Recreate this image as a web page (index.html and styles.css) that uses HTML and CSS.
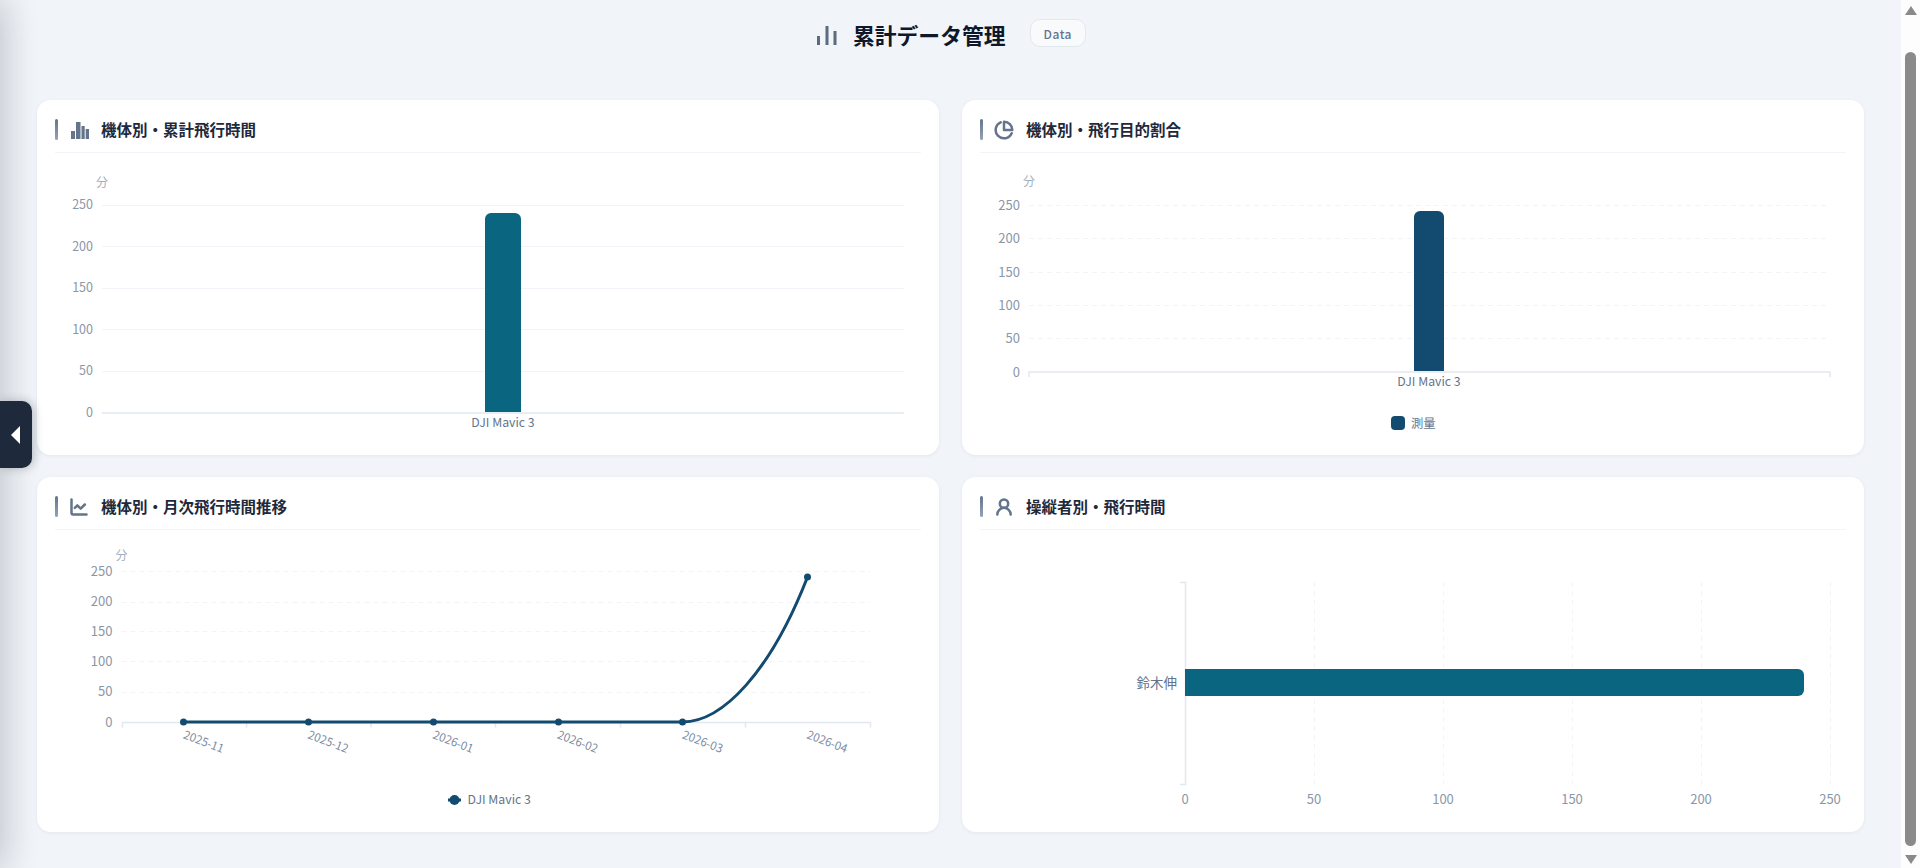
FILE: index.html
```html
<!DOCTYPE html>
<html lang="ja">
  <head>
    <meta charset="UTF-8" />
    <meta name="viewport" content="width=device-width, initial-scale=1.0" />
    <title>累計データ管理</title>
    <link rel="stylesheet" href="styles.css">
  </head>
  <body>
    <div class="sidebarEdge"></div>
    <button class="sidebarToggle"><span class="toggleArrow"></span></button>

    <main class="page">
      <header class="pageHeader">
        <svg class="pageIcon" viewBox="0 0 24 24">
          <path d="M3.5 13v9M12 3v19M20 8v14" />
        </svg>
        <h1>累計データ管理</h1>
        <span class="badge">Data</span>
      </header>

      <section class="cardGrid">
        <!-- 機体別 累計 -->
        <article class="card">
          <div class="cardHeader">
            <svg class="cardIcon filled" viewBox="-2 -1 20 20">
              <path d="M0 10h4v8H0zM5 1h4.500v17H5zM10.500 5h3.200v13h-3.200zM14.700 8H18v10h-3.300z" />
            </svg>
            <h2>機体別・累計飛行時間</h2>
          </div>
          <svg class="chart" viewBox="55 153 866 283">
            <text class="unit" x="102" y="187" text-anchor="middle">分</text>
            <g class="gridLine">
              <path d="M102 205.500H904M102 246.500H904M102 288.500H904M102 329.500H904M102 371.500H904" />
            </g>
            <path class="axisLine" d="M102 413H904" />
            <g class="tick small" text-anchor="end">
              <text x="93" y="209">250</text>
              <text x="93" y="251">200</text>
              <text x="93" y="292">150</text>
              <text x="93" y="334">100</text>
              <text x="93" y="375">50</text>
              <text x="93" y="417">0</text>
            </g>
            <path class="teal" d="M485 412V219a6 6 0 0 1 6-6h24a6 6 0 0 1 6 6V412z" />
            <text class="catLabel" x="503" y="427" text-anchor="middle">DJI Mavic 3</text>
          </svg>
        </article>

        <!-- 飛行目的 -->
        <article class="card">
          <div class="cardHeader">
            <svg class="cardIcon" viewBox="0 0 24 24">
              <path d="M21.210 15.890A10 10 0 1 1 8 2.830" />
              <path d="M22 12A10 10 0 0 0 12 2v10z" />
            </svg>
            <h2>機体別・飛行目的割合</h2>
          </div>
          <svg class="chart" viewBox="980 153 866 283">
            <text class="unit" x="1029" y="186" text-anchor="middle">分</text>
            <g class="gridLine dashed">
              <path d="M1029 205.500H1830M1029 238.500H1830M1029 272.500H1830M1029 305.500H1830M1029 338.500H1830" />
            </g>
            <path class="axisLine" d="M1029 377V372H1830V377" />
            <g class="tick" text-anchor="end">
              <text x="1020" y="210">250</text>
              <text x="1020" y="243">200</text>
              <text x="1020" y="277">150</text>
              <text x="1020" y="310">100</text>
              <text x="1020" y="343">50</text>
              <text x="1020" y="377">0</text>
            </g>
            <path class="navy" d="M1414 371V217a6 6 0 0 1 6-6h18a6 6 0 0 1 6 6V371z" />
            <text class="catLabel" x="1429" y="386" text-anchor="middle">DJI Mavic 3</text>
            <rect class="navy" x="1391" y="416" width="14" height="14" rx="4" />
            <text class="legendLabel" x="1411" y="428">測量</text>
          </svg>
        </article>

        <!-- 月次推移 -->
        <article class="card">
          <div class="cardHeader">
            <svg class="cardIcon" viewBox="0 0 24 24">
              <path d="M3 3v16a2 2 0 0 0 2 2h16" />
              <path d="M19 9l-5 5-4-4-3 3" />
            </svg>
            <h2>機体別・月次飛行時間推移</h2>
          </div>
          <svg class="chart" viewBox="54.500 530 866 283">
            <text class="unit" x="121" y="560" text-anchor="middle">分</text>
            <g class="gridLine dashed">
              <path d="M121 571.500H870M121 602.500H870M121 631.500H870M121 661.500H870M121 692.500H870" />
            </g>
            <path class="axisLine" d="M122 722.500H870M122 722.500v5M246 722.500v5M370.500 722.500v5M495 722.500v5M620 722.500v5M745 722.500v5M870 722.500v5" />
            <g class="tick" text-anchor="end">
              <text x="112" y="576">250</text>
              <text x="112" y="606">200</text>
              <text x="112" y="636">150</text>
              <text x="112" y="666">100</text>
              <text x="112" y="696">50</text>
              <text x="112" y="727">0</text>
            </g>
            <g class="dateLabel">
              <text transform="translate(182 738) rotate(21)">2025-11</text>
              <text transform="translate(306.500 738) rotate(21)">2025-12</text>
              <text transform="translate(431.500 738) rotate(21)">2026-01</text>
              <text transform="translate(556 738) rotate(21)">2026-02</text>
              <text transform="translate(681 738) rotate(21)">2026-03</text>
              <text transform="translate(805.500 738) rotate(21)">2026-04</text>
            </g>
            <path class="trendLine" d="M183 722H682C722 722 770 672 807 577" />
            <g class="navy">
              <circle cx="183" cy="722" r="3.500" />
              <circle cx="308" cy="722" r="3.500" />
              <circle cx="433" cy="722" r="3.500" />
              <circle cx="558" cy="722" r="3.500" />
              <circle cx="682" cy="722" r="3.500" />
              <circle cx="807" cy="577" r="3.500" />
              <circle cx="454" cy="800" r="5" />
            </g>
            <path class="legendStroke" d="M447.500 800H460.500" />
            <text class="legendLabel" x="467" y="804">DJI Mavic 3</text>
          </svg>
        </article>

        <!-- 操縦者別 -->
        <article class="card">
          <div class="cardHeader">
            <svg class="cardIcon" viewBox="0 0 24 24">
              <circle cx="12" cy="8" r="5" />
              <path d="M20 21a8 8 0 0 0-16 0" />
            </svg>
            <h2>操縦者別・飛行時間</h2>
          </div>
          <svg class="chart" viewBox="980 530 866 283">
            <g class="gridLine dashed">
              <path d="M1314.500 582V784M1443.500 582V784M1572.500 582V784M1701.500 582V784M1830.500 582V784" />
            </g>
            <path class="axisLine" d="M1180 582.500H1185.500V784.500H1180" />
            <path class="teal" d="M1185 669H1798a6 6 0 0 1 6 6V690a6 6 0 0 1-6 6H1185z" />
            <text class="catLabel large" x="1177" y="688" text-anchor="end">鈴木伸</text>
            <g class="tick" text-anchor="middle">
              <text x="1185" y="804">0</text>
              <text x="1314" y="804">50</text>
              <text x="1443" y="804">100</text>
              <text x="1572" y="804">150</text>
              <text x="1701" y="804">200</text>
              <text x="1830" y="804">250</text>
            </g>
          </svg>
        </article>
      </section>
    </main>

    <div class="scrollStrip">
      <span class="scrollUp"></span>
      <div class="scrollTrack"><span class="scrollThumb"></span></div>
      <span class="scrollDown"></span>
    </div>
  </body>
</html>
```

FILE: styles.css
```css
* {
  margin: 0;
  padding: 0;
  box-sizing: border-box;
}

html, body {
  height: 100%;
  overflow: hidden;
}

body {
  display: flex;
  background-color: #f1f5f9;
  font-family: "Noto Sans CJK JP", "Noto Sans", sans-serif;
}

.page {
  flex: 1;
  min-width: 0;
  padding: 0 37px;
}

.pageHeader {
  height: 100px;
  padding-top: 19px;
  display: flex;
  justify-content: center;
  align-items: flex-start;
}

.pageIcon {
  width: 24px;
  height: 24px;
  margin: 4px 14px 0 0;
  fill: none;
  stroke: #5b6b80;
  stroke-width: 3;
}

.pageHeader h1 {
  font-size: 21.800px;
  line-height: 32px;
  font-weight: 700;
  color: #0f172a;
}

.badge {
  height: 28px;
  margin-left: 24px;
  padding: 0 13px;
  display: flex;
  align-items: center;
  font-size: 12px;
  font-weight: 500;
  letter-spacing: 0.5px;
  color: #64748b;
  background-color: #f8fafc;
  border: 1px solid #e2e8f0;
  border-radius: 10px;
}

.cardGrid {
  display: grid;
  grid-template-columns: 902px 902px;
  grid-template-rows: 355px 355px;
  gap: 22px 23px;
}

.card {
  padding: 19px 18px;
  background-color: #fff;
  border-radius: 14px;
  box-shadow: 0 1px 4px rgba(15, 23, 42, 0.06);
}

.cardHeader {
  height: 34px;
  padding: 0 0 12px 14px;
  display: flex;
  align-items: center;
  gap: 12px;
  position: relative;
  border-bottom: 1px solid #f1f5f9;
}

.cardHeader::before {
  content: "";
  position: absolute;
  left: 0;
  top: 0;
  width: 3px;
  height: 21px;
  border-radius: 2px;
  background: linear-gradient(180deg, #64748b, #94a3b8);
}

.cardHeader h2 {
  font-size: 15.500px;
  line-height: 21px;
  font-weight: 700;
  color: #1e293b;
}

.cardIcon {
  width: 20px;
  height: 20px;
  fill: none;
  stroke: #64748b;
  stroke-width: 3;
  stroke-linecap: round;
  stroke-linejoin: round;
}

.cardIcon.filled {
  fill: #64748b;
  stroke: none;
}

.chart {
  display: block;
  width: 100%;
  height: 283px;
}

.chart text {
  font-size: 13px;
}

.chart .tick text {
  fill: #8a97a9;
}

.chart .tick.small text {
  font-size: 12.500px;
}

.chart .catLabel,
.chart .legendLabel {
  font-size: 12.300px;
  fill: #64748b;
}

.chart .dateLabel text {
  font-size: 11.500px;
  fill: #7c8aa0;
}

.chart .unit {
  font-size: 12px;
  fill: #a3afc0;
}

.chart .catLabel.large {
  font-size: 13.500px;
}

.gridLine path {
  fill: none;
  stroke: #f1f5f9;
  stroke-width: 1;
}

.gridLine.dashed path {
  stroke-dasharray: 5 4;
}

.axisLine {
  fill: none;
  stroke: #e2e8f0;
  stroke-width: 1.500;
}

.teal {
  fill: #0a6580;
}

.navy {
  fill: #134b70;
}

.trendLine {
  fill: none;
  stroke: #134b70;
  stroke-width: 3;
}

.legendStroke {
  stroke: #134b70;
  stroke-width: 3;
}

.sidebarEdge {
  position: absolute;
  left: -24px;
  top: 0;
  width: 24px;
  height: 100%;
  box-shadow: 0 0 36px rgba(15, 23, 42, 0.32);
}

.sidebarToggle {
  position: absolute;
  left: 0;
  top: 401px;
  width: 32px;
  height: 67px;
  display: flex;
  align-items: center;
  padding-left: 11px;
  background-color: #1e293b;
  border: none;
  border-radius: 0 10px 10px 0;
  box-shadow: 2px 0 10px rgba(15, 23, 42, 0.25);
}

.toggleArrow {
  width: 0;
  height: 0;
  border-top: 9px solid transparent;
  border-bottom: 9px solid transparent;
  border-right: 9px solid #fff;
}

.scrollStrip {
  width: 19px;
  display: flex;
  flex-direction: column;
  align-items: center;
  background-color: #fdfdfd;
}

.scrollUp,
.scrollDown {
  width: 0;
  height: 0;
  border-left: 6.500px solid transparent;
  border-right: 6.500px solid transparent;
}

.scrollUp {
  margin-top: 6px;
  border-bottom: 9px solid #8a8a8a;
}

.scrollDown {
  margin: 9px 0 4px;
  border-top: 9px solid #8a8a8a;
}

.scrollTrack {
  flex: 1;
  width: 100%;
  padding-top: 37px;
  display: flex;
  justify-content: center;
}

.scrollThumb {
  width: 11px;
  height: 794px;
  border-radius: 6px;
  background-color: #8a8a8a;
}
```
